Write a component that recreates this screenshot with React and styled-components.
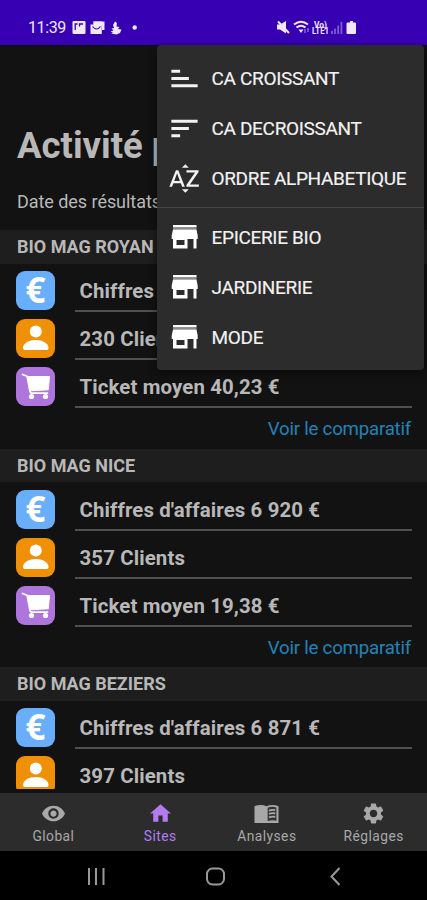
import React from "react";
import styled, { createGlobalStyle } from "styled-components";
import {
  MdSort,
  MdSortByAlpha,
  MdVisibility,
  MdHome,
  MdSettings
} from "react-icons/md";

const GlobalStyle = createGlobalStyle`
  * {
    box-sizing: border-box;
  }
  body {
    margin: 0;
    background: #000;
    font-family: Roboto, sans-serif;
  }
`

const Phone = styled.div`
  position: relative;
  display: flex;
  flex-direction: column;
  width: 427px;
  height: 900px;
  overflow: hidden;
  background: #121212;
  color: #b8b8b8;
`

const StatusBar = styled.header`
  display: flex;
  flex: none;
  align-items: center;
  height: 45px;
  padding: 10px 70px 0 28px;
  background: #3700b3;
  color: #eee8fa;
`

const Clock = styled.span`
  width: 44px;
  font-size: 16px;
  letter-spacing: -0.4px;
`

const StatusIcons = styled.svg`
  display: block;
  margin-left: ${props => (props.$right ? "auto" : "0")};
`

const Content = styled.main`
  display: flex;
  flex-direction: column;
  height: 744px;
  flex: none;
  overflow: hidden;
`

const Title = styled.h1`
  margin: 80px 0 0 17px;
  font-size: 36.5px;
  line-height: 42px;
  font-weight: 700;
  white-space: nowrap;
`

const ResultDate = styled.p`
  margin: 24px 0 17px 17px;
  font-size: 18px;
  line-height: 22px;
  letter-spacing: -0.05px;
  white-space: nowrap;
`

const Site = styled.section`
  flex: none;
  height: 218.6px;
`

const SiteName = styled.h2`
  margin: 0 0 7.5px;
  padding-left: 17px;
  height: 33.5px;
  background: #1e1e1e;
  font-size: 18px;
  line-height: 34.4px;
  font-weight: 700;
`

const Row = styled.div`
  display: flex;
  height: 48.2px;
  padding: 0 15.5px 0 16px;
`

const Badge = styled.div`
  flex: none;
  width: 39px;
  height: 39px;
  border-radius: 9px;
  background: ${props => props.$color};
`

const Euro = styled.span`
  display: block;
  font-family: "Open Sans", sans-serif;
  font-size: 35px;
  line-height: 37px;
  font-weight: 700;
  text-align: center;
  color: #fff;
`

const Label = styled.div`
  flex: 1;
  height: 41px;
  margin-left: 20px;
  padding-left: 4.5px;
  border-bottom: 2px solid #505050;
  font-size: 20.4px;
  line-height: 41px;
  font-weight: 700;
  letter-spacing: 0.13px;
`

const Compare = styled.a`
  display: block;
  margin-right: 16px;
  padding-top: 1.5px;
  text-align: right;
  font-size: 18.7px;
  line-height: 24px;
  letter-spacing: -0.24px;
  color: #2382b8;
`

const TabBar = styled.nav`
  display: flex;
  flex: none;
  height: 58px;
  margin-top: 4px;
  background: #2c2c2c;
`

const Tab = styled.div`
  display: flex;
  flex: 1;
  flex-direction: column;
  align-items: center;
  padding-top: 8px;
  font-size: 13.8px;
  line-height: 18px;
  letter-spacing: 0.45px;
  color: ${props => (props.$active ? "#b27cf0" : "#a8a8a8")};

  svg {
    display: block;
    margin-bottom: 1px;
  }
`

const SystemBar = styled.footer`
  flex: 1;
  background: #000;
`

const Menu = styled.div`
  position: absolute;
  top: 45px;
  left: 157px;
  width: 267px;
  height: 325px;
  padding-top: 9px;
  border-radius: 4px;
  background: #2c2c2c;
  box-shadow: 0 3px 9px rgba(0, 0, 0, 0.5);
  color: #f2f2f2;
`

const MenuGroup = styled.div`
  padding-bottom: 3.5px;

  & + & {
    border-top: 1px solid #464646;
    padding-top: 5px;
  }
`

const MenuItem = styled.div`
  display: flex;
  align-items: center;
  height: 49.8px;
  padding-left: 10px;
  font-size: 19px;
  letter-spacing: -0.33px;
  -webkit-text-stroke: 0.15px;
  white-space: nowrap;

  svg {
    flex: none;
    margin-right: 9.5px;
    transform: ${props => (props.$flip ? "scaleY(-1)" : "none")};
  }
`

const sites = [
  { name: "BIO MAG ROYAN", sales: "7 102", clients: "230", basket: "40,23" },
  { name: "BIO MAG NICE", sales: "6 920", clients: "357", basket: "19,38" },
  { name: "BIO MAG BEZIERS", sales: "6 871", clients: "397" }
]

const PersonIcon = () => (
  <svg width="39" height="39" viewBox="0 0 39 39" fill="#fff">
    <circle cx="19.8" cy="12.5" r="6" />
    <path d="M7 29c0-4.500 6-8 12.800-8s12.700 3.500 12.700 8c0 1.400-1 2-2.300 2H9.300C8 31 7 30.400 7 29z" />
  </svg>
)

const CartIcon = () => (
  <svg width="39" height="39" viewBox="0 0 39 39" fill="none" stroke="#fff">
    <path d="M6.500 7.500l4.500 1.700 3 15.500q.3 1.500 2 1.500h15.500" strokeWidth="1.700" strokeLinecap="round" strokeLinejoin="round" />
    <path d="M11.500 9.500h22l-1.200 13.300-18.300 1z" fill="#fff" strokeWidth="1" />
    <circle cx="15.500" cy="29.500" r="2.600" fill="#fff" stroke="none" />
    <circle cx="29.500" cy="29.500" r="2.600" fill="#fff" stroke="none" />
  </svg>
)

const StoreIcon = () => (
  <svg width="35" height="35" viewBox="0 0 35 35" fill="#fff">
    <path d="M6 5h23.500v2.500H6z" />
    <path d="M6 7.500h23.500v2H6z" fill="#8c8c8c" />
    <path fillRule="evenodd" d="M6 9.500h23.500l1.200 6V19h-1.200v9.500h-3V19h-6v9.500H6V19H4.700v-3.500zM9.500 20v5h8V20z" />
  </svg>
)

const BookIcon = () => (
  <svg width="25" height="25" viewBox="0 0 26 26" fill="currentColor">
    <path d="M.5 5.500Q7 3 13 5.500 19 3 25.500 5.500v17.500H.5z" />
    <path d="M14.200 7Q19 5 23.300 6.800V20.500Q19 19.500 14.200 20.800z" fill="#333" />
    <path d="M15.500 10q3.500-1.300 6.600-.5M15.500 13.500q3.500-1.300 6.600-.5M15.500 17q3.500-1.300 6.600-.5" fill="none" stroke="currentColor" strokeWidth="1.900" />
  </svg>
)

const SiteCard = ({ site }) => (
  <Site>
    <SiteName>{site.name}</SiteName>
    <Row>
      <Badge $color="#69aefa"><Euro>€</Euro></Badge>
      <Label>Chiffres d'affaires {site.sales} €</Label>
    </Row>
    <Row>
      <Badge $color="#ef9006"><PersonIcon /></Badge>
      <Label>{site.clients} Clients</Label>
    </Row>
    {site.basket && (
      <>
        <Row>
          <Badge $color="#ae75dc"><CartIcon /></Badge>
          <Label>Ticket moyen {site.basket} €</Label>
        </Row>
        <Compare>Voir le comparatif</Compare>
      </>
    )}
  </Site>
)

const App = () => {
  return (
    <Phone>
      <GlobalStyle />
      <StatusBar>
        <Clock>11:39</Clock>
        <StatusIcons width="68" height="16" viewBox="0 0 68 16" fill="#eee8fa">
          {/* gallery */}
          <rect x="0.500" y="1" width="13" height="13" rx="1.200" />
          <path d="M3.200 10V4h2.300M7.500 6.500V4H11" fill="none" stroke="#3700b3" strokeWidth="1.300" />
          {/* mails */}
          <path d="M21.500 1.500h11v8.500h-2.500V4h-8.500z" />
          <path d="M18.500 4.500h11.300v9.500H18.500z" />
          <path d="M21.500 1.500h8.500v4h-8.500z" />
          <path d="M20.500 6.500q4 5 8 0" fill="none" stroke="#3700b3" strokeWidth="1.200" />
          <path d="M43 1.500l2 1.500-.5 3.500 3 .5-1.500 2 3.500.5-1.500 3.500-3.500 1.500-5.500-1 2-1-2.500-1 3-1-2-2 2.500-.5-1-3z" />
          <circle cx="62.700" cy="7.500" r="2.200" />
        </StatusIcons>
        <StatusIcons $right width="80" height="16" viewBox="0 0 80 16" fill="#eee8fa">
          {/* muted speaker */}
          <path d="M0 4.500h3L9 1v12.500L3 9.500H0z" />
          <path d="M1 1.500l11 11.500" stroke="#eee8fa" strokeWidth="2" />
          {/* wifi */}
          <path d="M17 4.500q7-5.500 14 0M19.500 7.500q4.500-3.500 9 0" fill="none" stroke="#eee8fa" strokeWidth="2" />
          <path d="M21.500 9.500h5L24 13z" />
          <path d="M28 9v4M31 8v4" stroke="#9d80d9" strokeWidth="1.200" />
          <text x="37" y="7.500" fontSize="9" fontWeight="700" textLength="13" lengthAdjust="spacingAndGlyphs">Vo)</text>
          <text x="35" y="14.300" fontSize="8.500" fontWeight="700" textLength="17" lengthAdjust="spacingAndGlyphs">LTE1</text>
          <path d="M55 11v3M58 8.500V14M61.200 5.500V14M64.400 2v12" stroke="#8061cf" strokeWidth="1.700" />
          {/* battery */}
          <path d="M70.500 2.500H73V1h3v1.500h2q1 0 1 1V13q0 1-1 1h-7.500q-1 0-1-1V3.500q0-1 1-1z" />
        </StatusIcons>
      </StatusBar>
      <Content>
        <Title>Activité par site</Title>
        <ResultDate>Date des résultats</ResultDate>
        {sites.map(site => <SiteCard key={site.name} site={site} />)}
      </Content>
      <TabBar>
        <Tab><MdVisibility size={25} />Global</Tab>
        <Tab $active><MdHome size={25} />Sites</Tab>
        <Tab><BookIcon />Analyses</Tab>
        <Tab><MdSettings size={25} />Réglages</Tab>
      </TabBar>
      <SystemBar>
        <svg width="427" height="49" fill="none" stroke="#999" strokeWidth="2">
          <path d="M89 17v17M96 17v17M103.500 17v17" />
          <rect x="207" y="17.500" width="17" height="16" rx="5.500" />
          <path d="M339.500 17l-8 8.500 8 8.500" />
        </svg>
      </SystemBar>
      <Menu>
        <MenuGroup>
          <MenuItem $flip><MdSort size={35} />CA CROISSANT</MenuItem>
          <MenuItem><MdSort size={35} />CA DECROISSANT</MenuItem>
          <MenuItem><MdSortByAlpha size={35} />ORDRE ALPHABETIQUE</MenuItem>
        </MenuGroup>
        <MenuGroup>
          <MenuItem><StoreIcon />EPICERIE BIO</MenuItem>
          <MenuItem><StoreIcon />JARDINERIE</MenuItem>
          <MenuItem><StoreIcon />MODE</MenuItem>
        </MenuGroup>
      </Menu>
    </Phone>
  );
}

export default App;
